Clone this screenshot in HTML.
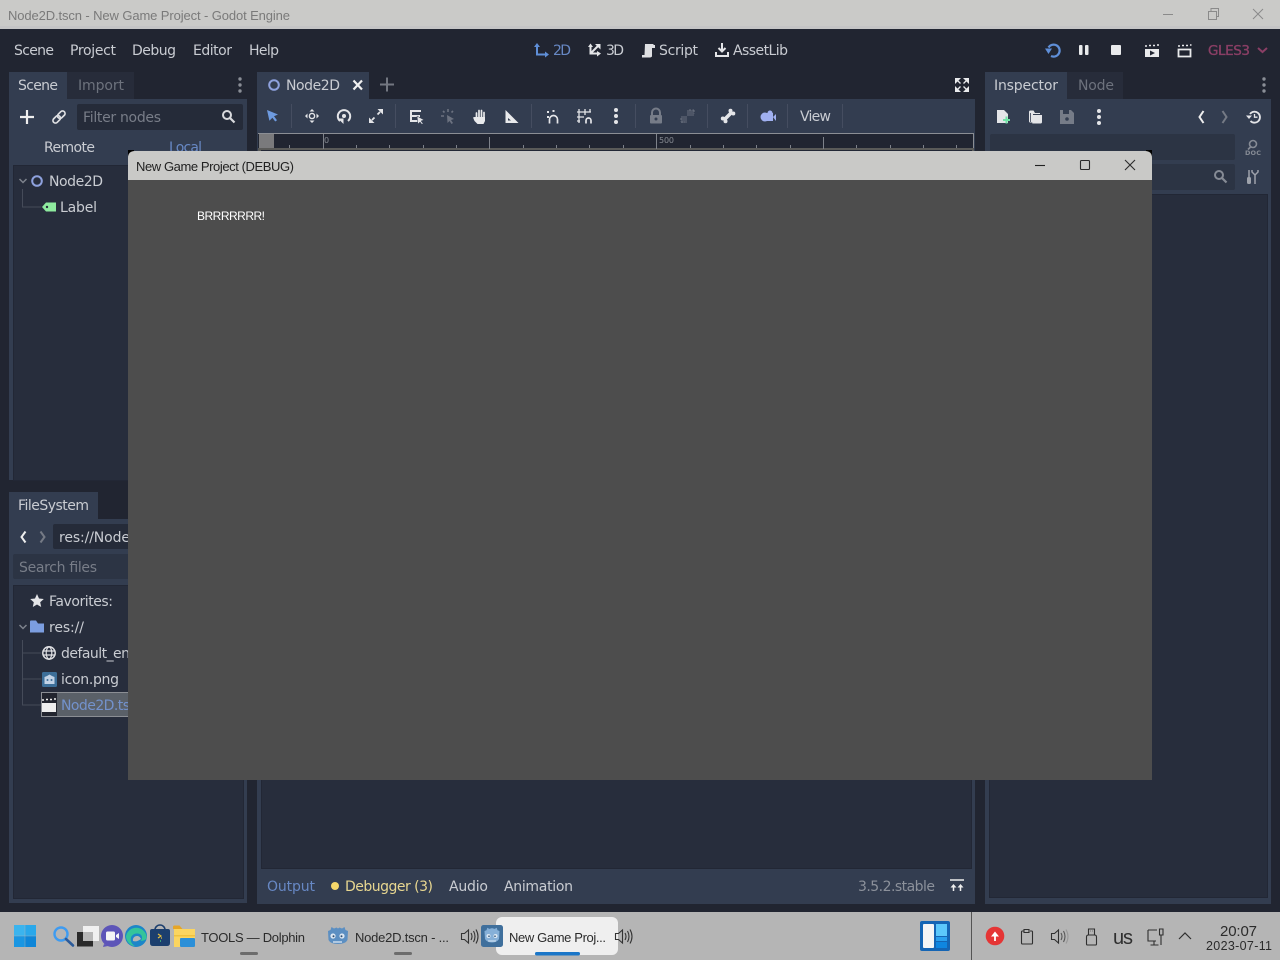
<!DOCTYPE html>
<html><head><meta charset="utf-8"><title>Node2D.tscn - New Game Project - Godot Engine</title>
<style>
html,body{margin:0;padding:0;width:1280px;height:960px;overflow:hidden;background:#212531}
svg{display:block}
text{font-family:"DejaVu Sans",sans-serif;font-size:14px;fill:#c9ccd2}
.w{font-family:"Liberation Sans",sans-serif;font-size:13px}
.d{fill:#6d727d}
.b{fill:#6788c4}
.k{fill:none;stroke:#2b2b2b;stroke-width:1.1}
</style></head><body>
<svg width="1280" height="960" viewBox="0 0 1280 960" xmlns="http://www.w3.org/2000/svg">
<rect width="1280" height="960" fill="#212531"/>
<!-- title bar -->
<rect width="1280" height="29" fill="#cacac8"/><rect y="26" width="1280" height="3" fill="#c4c4c5"/>
<text class="w" x="8" y="20" textLength="282" style="fill:#7a7a7a">Node2D.tscn - New Game Project - Godot Engine</text>
<path d="M1163 14.500h10" stroke="#8a8a8a" fill="none"/>
<path d="M1208.500 11.500h8v8h-8zM1211 11v-2.500h7.500v8h-2" stroke="#8a8a8a" fill="none"/>
<path d="M1253 9l10 10M1263 9l-10 10" stroke="#8a8a8a" fill="none"/>
<!-- menu -->
<text x="14" y="55" textLength="40">Scene</text>
<text x="70" y="55" textLength="46">Project</text>
<text x="132" y="55" textLength="44">Debug</text>
<text x="193" y="55" textLength="39">Editor</text>
<text x="249" y="55" textLength="30">Help</text>
<!-- main buttons -->
<path d="M537 46v8.500h9" fill="none" stroke="#5f8fd8" stroke-width="2"/><path d="M534 47l3-4 3 4zM545 51.500l4 3-4 3z" fill="#5f8fd8"/>
<text class="b" x="553" y="55" textLength="18">2D</text>
<path d="M590.500 46v7.500h8M590.500 53.500l8-8" fill="none" stroke="#e4e5e8" stroke-width="2"/><path d="M588 47l2.500-3.500 2.500 3.500zM595 44h5.500v5.500zM597 51l4 2.500-4 3z" fill="#e4e5e8"/>
<text x="606" y="55" textLength="18">3D</text>
<path d="M645 44h8.500v1h1.500v3h-3v8.500q-1 1-2 1h-8v-2.500h2.500z" fill="#dfe0e3"/>
<text x="659" y="55" textLength="39">Script</text>
<path d="M722 43v8M718.500 48l3.500 3.500 3.500-3.500M716 52v4h12v-4" fill="none" stroke="#e4e5e8" stroke-width="2"/>
<text x="733" y="55" textLength="55">AssetLib</text>
<!-- play controls -->
<path d="M1048.500 47.500A6 6 0 1 1 1051 56" fill="none" stroke="#5f8fd8" stroke-width="2.200"/>
<path d="M1045 48.500h7l-3.500 5.500z" fill="#5f8fd8"/>
<rect x="1079" y="45" width="3.500" height="10" rx="1" fill="#e9eaec"/><rect x="1085" y="45" width="3.500" height="10" rx="1" fill="#e9eaec"/>
<rect x="1111" y="45" width="10" height="10" rx="1" fill="#e9eaec"/>
<path d="M1145 49h14v8h-14z" fill="#e9eaec"/><path d="M1145 46h2M1149 45.500h2M1153 45.500h2M1157 45h2" stroke="#e9eaec" stroke-width="1.600"/><path d="M1150 50.500l5 2.500-5 2.500z" fill="#212531"/>
<path d="M1178.500 49.500h12v7h-12z" fill="#212531" stroke="#e9eaec" stroke-width="1.800"/><path d="M1178 46h2M1182 45.500h2M1186 45.500h2M1190 45h1.500" stroke="#e9eaec" stroke-width="1.600"/>
<text x="1208" y="55" textLength="42" style="fill:#8a3f65;stroke:#8a3f65;stroke-width:.35;font-size:13.500px">GLES3</text>
<path d="M1258 48l4.500 4 4.500-4" fill="none" stroke="#8a3f65" stroke-width="2"/>

<!-- SCENE DOCK -->
<rect x="9" y="99" width="238" height="381" fill="#333d50"/>
<rect x="9" y="72" width="58" height="28" fill="#333d50"/>
<rect x="67" y="72" width="67" height="27" fill="#272c3a"/>
<text x="18" y="90" textLength="40">Scene</text>
<text class="d" x="78" y="90" textLength="46">Import</text>
<g fill="#8a8e96"><circle cx="240" cy="79" r="1.700"/><circle cx="240" cy="85" r="1.700"/><circle cx="240" cy="91" r="1.700"/></g>
<path d="M20 117h14M27 110v14" stroke="#eee" stroke-width="2.200"/>
<g transform="rotate(-45 59 117)" fill="none" stroke="#dfe0e3" stroke-width="1.700"><rect x="51.500" y="114.500" width="8.500" height="5" rx="2.500"/><rect x="58" y="114.500" width="8.500" height="5" rx="2.500"/></g>
<rect x="77" y="104" width="166" height="26" rx="2" fill="#252b39"/>
<text x="83" y="122" textLength="78" style="fill:#787d88">Filter nodes</text>
<circle cx="227" cy="115" r="4" fill="none" stroke="#d8d9dc" stroke-width="2"/><path d="M230 118l4.500 4.500" stroke="#d8d9dc" stroke-width="2.200"/>
<text x="44" y="152" textLength="51">Remote</text>
<text class="b" x="169" y="152" textLength="33">Local</text>
<rect x="13.500" y="165.500" width="230" height="315" fill="#272d3c" stroke="#222735"/>
<path d="M19.500 179l3.500 3.500 3.500-3.500" fill="none" stroke="#7d828c" stroke-width="1.500"/>
<circle cx="37" cy="181" r="4.800" fill="none" stroke="#8ea1dd" stroke-width="2"/>
<text x="49" y="186" textLength="54">Node2D</text>
<path d="M22.500 189v18h19" fill="none" stroke="#454b59"/>
<path d="M42 207l4-4.500h10v9h-10z" fill="#8eeb9f"/><circle cx="47" cy="207" r="1.200" fill="#272d3c"/>
<text x="60" y="212" textLength="37">Label</text>

<!-- FILESYSTEM DOCK -->
<rect x="9" y="519" width="238" height="384" fill="#333d50"/>
<rect x="9" y="492" width="89" height="28" fill="#333d50"/>
<text x="18" y="510" textLength="71">FileSystem</text>
<path d="M25.500 531.500l-4 5.500 4 5.500" fill="none" stroke="#eee" stroke-width="2"/>
<path d="M40.500 531.500l4 5.500-4 5.500" fill="none" stroke="#757a85" stroke-width="2"/>
<rect x="53" y="524" width="190" height="25" rx="2" fill="#252b39"/>
<text x="59" y="542" textLength="71">res://Node</text>
<rect x="13" y="554" width="230" height="25" rx="2" fill="#2c3444"/>
<text x="19" y="572" textLength="78" style="fill:#787d88">Search files</text>
<rect x="13.500" y="585.500" width="230" height="313" fill="#272d3c" stroke="#222735"/>
<path d="M37 594l2 4.500 4.800.5-3.600 3.200 1 4.800-4.200-2.500-4.200 2.500 1-4.800-3.600-3.200 4.800-.5z" fill="#e4e5e8"/>
<text x="49" y="606" textLength="64">Favorites:</text>
<path d="M19.500 625l3.500 3.500 3.500-3.500" fill="none" stroke="#7d828c" stroke-width="1.500"/>
<path d="M30 621.500q0-1 1-1h5l2 3h6v9h-14z" fill="#7c9ee0"/>
<text x="49" y="632" textLength="35">res://</text>
<path d="M22.500 640v65h19M22.500 653h19M22.500 679h19" fill="none" stroke="#454b59"/>
<circle cx="49" cy="653" r="6.200" fill="none" stroke="#dfe0e3" stroke-width="1.500"/>
<ellipse cx="49" cy="653" rx="2.800" ry="6" fill="none" stroke="#dfe0e3" stroke-width="1.200"/><path d="M43 651h12M43 655h12" stroke="#dfe0e3" stroke-width="1.200"/>
<text x="61" y="658" textLength="69">default_en</text>
<rect x="42" y="672" width="15" height="15" rx="1.500" fill="#3d6f99"/><path d="M44.500 684v-7l2.500-1 2.500-1.500 2.500 1.500 2.500 1v7z" fill="#c3d3e6"/><circle cx="47.500" cy="680" r="1" fill="#3d6f99"/><circle cx="51.500" cy="680" r="1" fill="#3d6f99"/>
<text x="61" y="684" textLength="58">icon.png</text>
<rect x="41.500" y="692.500" width="88" height="24" fill="#5a6068" stroke="#8b8e94"/>
<rect x="42" y="693" width="15" height="23" fill="#22252f"/>
<rect x="42" y="703" width="14" height="9" fill="#eee"/><path d="M42 700h2M46 699.500h2M50 699.500h2M54 699h2" stroke="#eee" stroke-width="1.600"/>
<text x="61" y="710" textLength="69" style="fill:#7392cc">Node2D.ts</text>

<!-- CENTER -->
<rect x="257" y="99" width="718" height="805" fill="#333d50"/>
<rect x="257" y="72" width="112" height="28" fill="#333d50"/>
<circle cx="274" cy="85" r="4.800" fill="none" stroke="#8ea1dd" stroke-width="2"/>
<text x="286" y="90" textLength="54">Node2D</text>
<path d="M353.500 80.500l8.500 9M362 80.500l-8.500 9" stroke="#f0f0f0" stroke-width="2.200"/>
<path d="M380 84.500h14M387 77.500v14" stroke="#737781" stroke-width="2"/>
<g fill="#e9eaec"><path d="M955 78h6l-6 6zM969 78h-6l6 6zM955 92h6l-6-6zM969 92h-6l6-6z"/></g>
<path d="M957 80l3.500 3.500M967 80l-3.500 3.500M957 90l3.500-3.500M967 90l-3.500-3.500" stroke="#e9eaec" stroke-width="1.300"/>
<!-- toolbar -->
<path d="M267 110l11 4.500-4 1.800 3 4-1.800 1.200-2.800-3.800-3 3z" fill="#6e9be0"/>
<g stroke="#454d60"><path d="M291.500 104v24M395.500 104v24M531.500 104v24M635.500 104v24M707.500 104v24M747.500 104v24M787.500 104v24M842.500 104v24"/></g>
<circle cx="312" cy="116" r="2.600" fill="none" stroke="#e4e5e8" stroke-width="1.400"/><path d="M312 109l-2.500 2.500h5zM312 123l-2.500-2.500h5zM305 116l2.500-2.500v5zM319 116l-2.500-2.500v5z" fill="#e4e5e8"/>
<path d="M340 121a6.200 6.200 0 1 1 8 0" fill="none" stroke="#e4e5e8" stroke-width="2"/><path d="M338 118.500h5.500v5.500z" fill="#e4e5e8"/><circle cx="344" cy="116" r="2" fill="#e4e5e8"/>
<path d="M369 123v-5.500l5.500 5.500zM383 109v5.500l-5.500-5.500z" fill="#e4e5e8"/><path d="M372 120l2.500-2.500M380 112l-2.500 2.500" stroke="#e4e5e8" stroke-width="1.800"/>
<path d="M410 110h11v2h-9v3h8v2h-8v3h6v2h-8z" fill="#e4e5e8"/><path d="M417 116l7 4-3 1 2 2.500-1 1-2-2.500-2 2z" fill="#e4e5e8" stroke="#333d50" stroke-width=".5"/>
<g stroke="#6c7280" stroke-width="1.600"><path d="M448 109v3M441 116h3"/><path d="M443 111l1.500 1.500M453 111l-1.500 1.500"/></g><path d="M447 115l7 4-3 1 2 3-1.500 1-2-3-2 2z" fill="#6c7280"/>
<path d="M476.500 119v-6M479 119v-8.500M481.500 119v-8.500M484 119v-6.500" stroke="#e9eaec" stroke-width="1.700" stroke-linecap="round"/><path d="M475.500 117h9.500v4l-1.500 3h-6l-3-3-1.500-3.500 1.500-.5z" fill="#e9eaec"/>
<path d="M505.500 110v13h13z" fill="#e9eaec"/><path d="M508 118v2.500h3z" fill="#333d50"/>
<path d="M549.500 123.500v-4a4 4 0 0 1 8 0v4" fill="none" stroke="#e4e5e8" stroke-width="1.700"/><path d="M547 111h2v2h-2zM552.500 110h2v2h-2zM547 116h2v2h-2z" fill="#e4e5e8"/>
<path d="M579 109v14M585 109v6M590 109v3M577 112h14M577 117h7M577 121h3" stroke="#e4e5e8" stroke-width="1.300"/><path d="M586 123.500v-3a2.500 2.500 0 0 1 5 0v3" fill="none" stroke="#e4e5e8" stroke-width="1.700"/>
<g fill="#e4e5e8"><circle cx="616" cy="110" r="2"/><circle cx="616" cy="116" r="2"/><circle cx="616" cy="122" r="2"/></g>
<path d="M652 115v-2.500a4 4 0 0 1 8 0v2.500" fill="none" stroke="#767c88" stroke-width="2"/><rect x="650" y="115" width="12" height="8.500" rx="1" fill="#767c88"/><circle cx="656" cy="119" r="1.500" fill="#333d50"/>
<path d="M681 116h6v7h-6zM687 110h7v6h-7" fill="#4d5566" transform="rotate(0)"/><path d="M689 110h5M694 110v4M681 122h4M681 118v4" fill="none" stroke="#6c7280" stroke-dasharray="2 1.500"/>
<path d="M724.500 119.500l7-7" stroke="#e4e5e8" stroke-width="3.500"/><g fill="#e4e5e8"><circle cx="722.800" cy="118.500" r="2"/><circle cx="725.500" cy="121.300" r="2"/><circle cx="730.500" cy="110.700" r="2"/><circle cx="733.300" cy="113.500" r="2"/></g>
<circle cx="765" cy="117" r="4.500" fill="#a0b0f0"/><circle cx="770" cy="113" r="2.500" fill="#a0b0f0"/><rect x="764" y="113" width="9" height="8" fill="#a0b0f0"/><path d="M773 117l3-3v7z" fill="#a0b0f0"/>
<text x="800" y="121" textLength="31">View</text>
<!-- ruler -->
<rect x="258" y="133" width="716" height="16" fill="#212531"/>
<path d="M258 133.500h716M973.500 133v18" stroke="#8b8e94" fill="none"/>
<rect x="259" y="134" width="15" height="15" fill="#7a7a7c"/>
<rect x="258" y="148" width="716" height="3" fill="#5a5a58"/>
<path d="M323.500 134v15M489.500 137v12M656.500 134v15M823.500 137v12" stroke="#7e828a"/>
<path d="M289.500 145v3M356.500 145v3M389.500 145v3M423.500 145v3M456.500 145v3M523.500 145v3M556.500 145v3M589.500 145v3M623.500 145v3M690.500 145v3M723.500 145v3M756.500 145v3M790.500 145v3M856.500 145v3M890.500 145v3M923.500 145v3M956.500 145v3" stroke="#7e828a"/>
<text x="324" y="143" textLength="5" style="font-size:8px;fill:#868a92">0</text>
<text x="659" y="143" textLength="15" style="font-size:8px;fill:#868a92">500</text>
<!-- bottom -->
<rect x="261.500" y="150.500" width="710" height="718" fill="#272d3c" stroke="#222735"/>
<text class="b" x="267" y="891" textLength="48">Output</text>
<circle cx="335" cy="886" r="4" fill="#f5d76a"/>
<text x="345" y="891" textLength="88" style="fill:#e7d690">Debugger (3)</text>
<text x="449" y="891" textLength="39">Audio</text>
<text x="504" y="891" textLength="69">Animation</text>
<text x="858" y="891" textLength="77" style="fill:#8c919b">3.5.2.stable</text>
<path d="M950 880h14" stroke="#eee" stroke-width="1.500"/><path d="M953.500 884l-3 3.500h6zM960.500 884l-3 3.500h6z" fill="#eee"/><path d="M953.500 887v4M960.500 887v4" stroke="#eee" stroke-width="1.500"/>

<!-- INSPECTOR -->
<rect x="985" y="99" width="286" height="805" fill="#333d50"/>
<rect x="985" y="72" width="82" height="28" fill="#333d50"/>
<rect x="1067" y="72" width="56" height="27" fill="#272c3a"/>
<text x="994" y="90" textLength="64">Inspector</text>
<text class="d" x="1078" y="90" textLength="36">Node</text>
<g fill="#8a8e96"><circle cx="1264" cy="79" r="1.700"/><circle cx="1264" cy="85" r="1.700"/><circle cx="1264" cy="91" r="1.700"/></g>
<path d="M997 110h7l4 4v9h-11z" fill="#e4e5e8"/><path d="M1006.500 116.500v7M1003 120h7" stroke="#6fe3a5" stroke-width="2"/>
<path d="M1029 112q0-1.500 1.500-1.500h3l1.500 2.500h5v1h-7v7q0 1.500-1 1.500h-2q-1 0-1-1.500zM1032 115h10v7q0 1.500-1.500 1.500h-8q-.5 0 0-1.500z" fill="#e4e5e8"/><path d="M1030.500 113v9" stroke="#333d50" stroke-width=".8"/>
<path d="M1060 110h11l3 3v11h-14z" fill="#767c88"/><rect x="1063" y="110" width="6" height="4" fill="#333d50"/><circle cx="1067" cy="119" r="1.800" fill="#333d50"/>
<g fill="#e4e5e8"><circle cx="1099" cy="111" r="2"/><circle cx="1099" cy="117" r="2"/><circle cx="1099" cy="123" r="2"/></g>
<path d="M1203.500 111l-4 6 4 6" fill="none" stroke="#eee" stroke-width="2"/>
<path d="M1222.500 111l4 6-4 6" fill="none" stroke="#757a85" stroke-width="2"/>
<path d="M1250 114a5.500 5.500 0 1 1 .5 7" fill="none" stroke="#e4e5e8" stroke-width="1.800"/><path d="M1246 115.500h6l-3 3.500z" fill="#e4e5e8"/><path d="M1254.500 114v3.200h3" fill="none" stroke="#e4e5e8" stroke-width="1.300"/>
<rect x="990" y="134" width="245" height="26" rx="2" fill="#2c3444"/>
<circle cx="1253" cy="144" r="3.500" fill="none" stroke="#868b95" stroke-width="1.600"/><path d="M1250.500 147l-2.500 2.500" stroke="#868b95" stroke-width="1.600"/>
<text x="1245" y="155" textLength="16" style="font-size:6.500px;font-weight:bold;fill:#868b95">DOC</text>
<rect x="990" y="164" width="245" height="26" rx="2" fill="#2c3444"/>
<circle cx="1219" cy="175" r="4" fill="none" stroke="#868b95" stroke-width="2"/><path d="M1222 178l4.500 4.500" stroke="#868b95" stroke-width="2.200"/>
<path d="M1249 170v7M1255 174v10M1252 170v2l3 3 3-3v-2" fill="none" stroke="#9ea2ab" stroke-width="1.500"/><rect x="1247" y="177" width="4" height="7" rx="1.500" fill="#9ea2ab"/>
<rect x="989.500" y="194.500" width="278" height="703" fill="#272d3c" stroke="#222735"/>

<!-- GAME WINDOW -->
<rect x="1146" y="150" width="6" height="6" fill="#000"/><rect x="128" y="150" width="6" height="6" fill="#000"/>
<path d="M128 158q0-7 7-7h1010q7 0 7 7v22h-1024z" fill="#c9c9c7"/>
<rect x="128" y="180" width="1024" height="600" fill="#4d4d4d"/>
<text class="w" x="136" y="171" textLength="158" style="fill:#222">New Game Project (DEBUG)</text>
<path d="M1035 165.500h10" stroke="#222" stroke-width="1.100"/>
<rect x="1080.500" y="160.500" width="9" height="9" rx="1" class="k"/>
<path d="M1125 160l10 10M1135 160l-10 10" class="k"/>
<text class="w" x="197" y="220" textLength="68" style="font-size:12px;fill:#fff">BRRRRRRR!</text>

<!-- TASKBAR -->
<rect y="912" width="1280" height="48" fill="#b5b5b5"/>
<rect x="971" y="912" width="1" height="48" fill="#545454"/>
<rect x="14" y="925" width="10.800" height="10.800" fill="#3bb4ee"/><rect x="25.200" y="925" width="10.800" height="10.800" fill="#2aa8ea"/><rect x="14" y="936.200" width="10.800" height="10.800" fill="#1a96e2"/><rect x="25.200" y="936.200" width="10.800" height="10.800" fill="#0f86d8"/>
<circle cx="61" cy="934" r="6.500" fill="none" stroke="#3e9bf0" stroke-width="2.400"/><path d="M66 939l7 6.500" stroke="#2c5b9a" stroke-width="2.600" stroke-linecap="round"/>
<rect x="83" y="926" width="16" height="15" fill="#f0f0f0"/><rect x="77" y="932" width="16" height="14.500" fill="#2a2a2a"/><rect x="83" y="932" width="10" height="9" fill="#b8b8b8"/>
<circle cx="112" cy="936" r="11" fill="#5d55b8"/><path d="M104 944l-1 3 5-1z" fill="#5d55b8"/><rect x="106" y="931.500" width="9" height="9" rx="1.500" fill="#f5f5f5"/><path d="M116 935l3-2v6l-3-2z" fill="#f5f5f5"/>
<circle cx="136" cy="936" r="11" fill="#1c86c8"/><path d="M126 936a10.500 10.500 0 0 1 20.500 0c1 4-3 5-6 5 2-2 2-5 0-6.500-3-2-8-1-9.500 3-1 4 1 7 4 8.500-5 0-9-5-9-10z" fill="#35c49a"/><path d="M133 941a4 4 0 0 1 4-5c2 0 3 1 4 3-3 2-5 3-8 2z" fill="#b5b5b5"/>
<path d="M150 931q0-2 2-2h16q2 0 2 2v12q0 3-3 3h-14q-3 0-3-3z" fill="#1c3f6e"/><path d="M155 930a5 5 0 0 1 10 0" fill="none" stroke="#1c3f6e" stroke-width="1.600"/><path d="M158 934l3 2-3 2M162 938h-1" fill="none" stroke="#e6c040" stroke-width="1.200"/><path d="M160 941h1" stroke="#45c47a" stroke-width="1.500"/>
<path d="M173 927q0-1.500 1.500-1.500h5l3 3.500h-9.500z" fill="#e6a526"/><rect x="174" y="929" width="21" height="18" fill="#fbd560"/><rect x="180" y="938" width="15" height="9" fill="#2b8fd8" rx="1"/><rect x="174" y="935" width="21" height="1.500" fill="#f0c23e"/>
<text class="w" x="201" y="942" textLength="104" style="fill:#2b2b2b">TOOLS — Dolphin</text>
<rect x="240" y="952" width="18" height="3" rx="1.500" fill="#6c6c6c"/>
<path d="M328 931l2.500-1 1-3 2.500 1.500 2.500-1 1.500 1 1.500-1 2.500 1 2.500-1.500 1 3 2.500 1-.5 9q-2 4-9.500 4t-9.500-4z" fill="#5c8fc2"/><circle cx="333" cy="936" r="2.600" fill="#dce7f2"/><circle cx="342" cy="936" r="2.600" fill="#dce7f2"/><circle cx="333.500" cy="936.300" r="1" fill="#2f4f70"/><circle cx="341.500" cy="936.300" r="1" fill="#2f4f70"/><path d="M333 942h9" stroke="#dce7f2" stroke-width="1.300"/>
<text class="w" x="355" y="942" textLength="94" style="fill:#2b2b2b">Node2D.tscn - ...</text>
<rect x="394" y="952" width="18" height="3" rx="1.500" fill="#6c6c6c"/>
<g fill="none" stroke="#333" stroke-width="1.100"><path d="M461.500 933.500h3l4-3.500v13l-4-3.500h-3z"/><path d="M471 933q2 3.500 0 7M473.500 931q3 5.500 0 11M476 929.500q4 7 0 14"/></g>
<rect x="496" y="917" width="122" height="38" rx="6" fill="#efefef"/>
<rect x="481" y="925" width="22" height="22" rx="2.500" fill="#3f6f9c"/>
<path d="M484.500 931l2-.8.800-2.500 2 1.200 2.700-.8 2.700.8 2-1.200.8 2.500 2 .8-.5 8q-2 3.500-7 3.500t-7-3.500z" fill="#86b0d8"/><circle cx="488.500" cy="936" r="2" fill="#dbe8f4"/><circle cx="495.500" cy="936" r="2" fill="#dbe8f4"/><circle cx="489" cy="936.200" r=".8" fill="#2f4f70"/><circle cx="495" cy="936.200" r=".8" fill="#2f4f70"/><path d="M488 941h8" stroke="#dbe8f4"/>
<text class="w" x="509" y="942" textLength="97" style="fill:#2b2b2b">New Game Proj...</text>
<rect x="535" y="952" width="45" height="3.500" rx="1.700" fill="#1a76c8"/>
<g fill="none" stroke="#333" stroke-width="1.100"><path d="M615.500 933.500h3l4-3.500v13l-4-3.500h-3z"/><path d="M625 933q2 3.500 0 7M627.500 931q3 5.500 0 11M630 929.500q4 7 0 14"/></g>
<rect x="920" y="921" width="30" height="30" rx="2" fill="#1565b4"/>
<rect x="923" y="924" width="11" height="24" rx="1" fill="#f5f5f5"/>
<rect x="936" y="924" width="11" height="12" fill="#5cc8fb"/><rect x="936" y="937" width="11" height="4" fill="#2aa0ee"/><rect x="936" y="942" width="11" height="6" fill="#0f86e0"/>
<circle cx="995" cy="936" r="9.300" fill="#e53535"/><path d="M995 941v-5" stroke="#fff" stroke-width="1.800"/><path d="M991 936.500l4-5 4 5z" fill="#fff"/>
<g fill="none" stroke="#2f2f2f" stroke-width="1.100">
<path d="M1024 931h-1.500q-1 0-1 1v11q0 1 1 1h9q1 0 1-1v-11q0-1-1-1h-1.500M1024 929.500h5v3h-5z"/>
<path d="M1051.500 933.500h3l4-3.500v13l-4-3.500h-3z"/><path d="M1061 933q2 3.500 0 7M1063.500 931q3 5.500 0 11" stroke="#555"/><path d="M1066 929.500q4 7 0 14" stroke="#999"/>
<path d="M1088.500 935v-6h6v6M1086.500 937q0-2 2-2h6q2 0 2 2v7q0 1-1 1h-8q-1 0-1-1z"/><path d="M1090 931h.5M1092.500 931h.5"/>
<path d="M1148 930h9M1148 930v11h8M1150.500 945h8M1154 941v4"/><path d="M1159.500 929h3.500v6h-3.500zM1161 935v10"/>
</g>
<path d="M1179 939l6-6 6 6" fill="none" stroke="#2f2f2f" stroke-width="1.200"/>
<text class="w" x="1113" y="944" textLength="20" style="font-size:20px;fill:#2f2f2f">us</text>
<text class="w" x="1220" y="936" textLength="37" style="font-size:15px;fill:#2b2b2b">20:07</text>
<text class="w" x="1206" y="950" textLength="66" style="font-size:12.500px;fill:#2b2b2b">2023-07-11</text>
</svg>
</body></html>
